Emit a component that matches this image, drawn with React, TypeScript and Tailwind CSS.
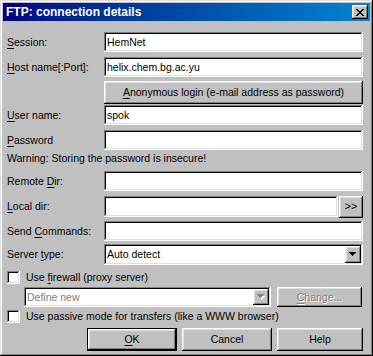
import React from "react";

const raised =
  "shadow-[inset_-1px_-1px_#000000,inset_1px_1px_#ffffff,inset_-2px_-2px_#808080,inset_2px_2px_#dfdfdf]";
const sunken =
  "shadow-[inset_-1px_-1px_#ffffff,inset_1px_1px_#808080,inset_-2px_-2px_#dfdfdf,inset_2px_2px_#000000]";

function U({ children }: { children: React.ReactNode }) {
  return <span className="underline underline-offset-[2px]">{children}</span>;
}

function Field({ value, className = "w-[259px]", h = "h-[20px]" }: { value?: string; className?: string; h?: string }) {
  return (
    <div className={`${className} ${h} bg-white ${sunken} flex items-center px-[3px] text-black`}>
      {value}
    </div>
  );
}

function Row({ label, mt, h = "h-[20px]", children }: { label: React.ReactNode; mt: string; h?: string; children: React.ReactNode }) {
  return (
    <div className={`flex items-center ${mt} ${h}`}>
      <div className="w-[97px] shrink-0">{label}</div>
      {children}
    </div>
  );
}

function Arrow({ disabled = false }: { disabled?: boolean }) {
  return (
    <div className={`w-[16px] h-full bg-[#c0c0c0] ${raised} flex items-center justify-center`}>
      <svg width="8" height="6" viewBox="0 0 8 6" shapeRendering="crispEdges">
        {disabled && <path d="M2 2h6v1H2zM3 3h4v1H3zM4 4h2v1H4zM4 5h1v1H4z" fill="#ffffff" />}
        <path d="M0 0h7v1H0zM1 1h5v1H1zM2 2h3v1H2zM3 3h1v1H3z" fill={disabled ? "#808080" : "#000000"} />
      </svg>
    </div>
  );
}

function Check({ mt, children }: { mt: string; children: React.ReactNode }) {
  return (
    <div className={`flex items-center ${mt} h-[13px]`}>
      <div className={`w-[13px] h-[13px] bg-white ${sunken}`} />
      <div className="ml-[6px]">{children}</div>
    </div>
  );
}

export default function App() {
  return (
    <div
      className="w-[373px] h-[356px] bg-[#c0c0c0] p-[3px] shadow-[inset_-1px_-1px_#000000,inset_1px_1px_#dfdfdf,inset_-2px_-2px_#808080,inset_2px_2px_#ffffff] text-[10.5px] leading-[13px] text-black"
      style={{ fontFamily: '"Liberation Sans", Arial, sans-serif' }}
    >
      {/* title bar */}
      <div className="h-[18px] bg-gradient-to-r from-[#000080] to-[#1084d0] flex items-center pl-[3px] pr-[2px]">
        <div className="text-white font-bold text-[12px] flex-1">FTP: connection details</div>
        <div className={`w-[16px] h-[14px] bg-[#c0c0c0] ${raised} flex items-center justify-center`}>
          <svg width="8" height="7" viewBox="0 0 8 7" shapeRendering="crispEdges">
            <path
              d="M0 0h2v1H0zM6 0h2v1H6zM1 1h2v1H1zM5 1h2v1H5zM2 2h4v1H2zM3 3h2v1H3zM2 4h4v1H2zM1 5h2v1H1zM5 5h2v1H5zM0 6h2v1H0zM6 6h2v1H6z"
              fill="#000000"
            />
          </svg>
        </div>
      </div>

      <div className="pl-[4px] flex flex-col">
        <Row mt="mt-[11px]" label={<><U>S</U>ession:</>}>
          <Field value="HemNet" />
        </Row>
        <Row mt="mt-[5px]" label={<><U>H</U>ost name[:Port]:</>}>
          <Field value="helix.chem.bg.ac.yu" />
        </Row>
        <Row mt="mt-[4px]" h="h-[23px]" label={null}>
          <div className={`w-[259px] h-full bg-[#c0c0c0] ${raised} flex items-center justify-center`}>
            <span>
              <U>A</U>nonymous login (e-mail address as password)
            </span>
          </div>
        </Row>
        <Row mt="mt-[1px]" label={<><U>U</U>ser name:</>}>
          <Field value="spok" />
        </Row>
        <Row mt="mt-[5px]" label={<><U>P</U>assword</>}>
          <Field />
        </Row>
        <div className="mt-[2px] h-[13px]">Warning: Storing the password is insecure!</div>
        <Row mt="mt-[6px]" label={<>Remote <U>D</U>ir:</>}>
          <Field />
        </Row>
        <Row mt="mt-[5px]" h="h-[21px]" label={<><U>L</U>ocal dir:</>}>
          <Field className="w-[234px]" h="h-[21px]" />
          <div className={`ml-[1px] w-[24px] h-[22px] bg-[#c0c0c0] ${raised} flex items-center justify-center`}>
            &gt;&gt;
          </div>
        </Row>
        <Row mt="mt-[4px]" label={<>Send <U>C</U>ommands:</>}>
          <Field />
        </Row>
        <Row mt="mt-[3px]" h="h-[21px]" label={<>Server <U>t</U>ype:</>}>
          <div className={`w-[259px] h-[21px] bg-white ${sunken} flex items-center p-[2px]`}>
            <div className="flex-1 pl-[1px]">Auto detect</div>
            <Arrow />
          </div>
        </Row>
        <Check mt="mt-[6px]">
          Use <U>f</U>irewall (proxy server)
        </Check>
        <div className="flex mt-[3px] h-[20px] pl-[17px]">
          <div className={`w-[247px] h-full bg-white ${sunken} flex items-center p-[2px]`}>
            <div className="flex-1 pl-[1px] text-[#808080]">Define new</div>
            <Arrow disabled />
          </div>
          <div className={`ml-[6px] w-[85px] h-full bg-[#c0c0c0] ${raised} flex items-center justify-center text-[#808080] [text-shadow:1px_1px_#ffffff]`}>
            <span>
              <U>C</U>hange...
            </span>
          </div>
        </div>
        <Check mt="mt-[3px]">Use passive mode for transfers (like a WWW browser)</Check>
        <div className="flex mt-[5px] h-[23px] pl-[80px]">
          <div className="w-[90px] h-full border border-black">
            <div className={`w-full h-full bg-[#c0c0c0] ${raised} flex items-center justify-center`}>
              <span>
                <U>O</U>K
              </span>
            </div>
          </div>
          <div className={`ml-[5px] w-[90px] h-full bg-[#c0c0c0] ${raised} flex items-center justify-center`}>
            Cancel
          </div>
          <div className={`ml-[5px] w-[86px] h-full bg-[#c0c0c0] ${raised} flex items-center justify-center`}>
            Help
          </div>
        </div>
      </div>
    </div>
  );
}
